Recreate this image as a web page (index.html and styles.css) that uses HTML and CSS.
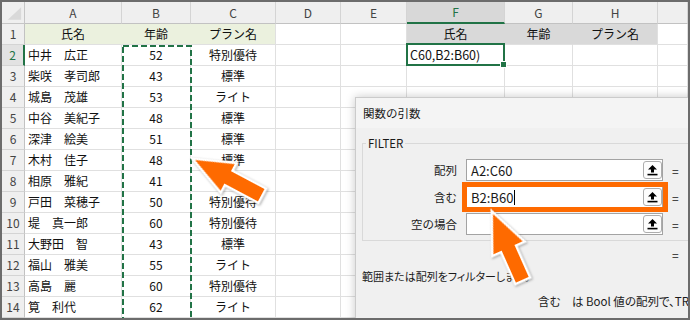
FILE: index.html
```html
<!DOCTYPE html>
<html lang="ja">
<head>
<meta charset="utf-8">
<title>FILTER</title>
<link rel="stylesheet" href="styles.css">
</head>
<body>
<div class="frame">
  <div class="sheet">
    <div class="corner"><svg width="23" height="22" viewBox="0 0 23 22"><polygon points="6,18 20,5 20,18" fill="#d9d9d9"/></svg></div>
    <div class="ch">A</div><div class="ch">B</div><div class="ch">C</div><div class="ch">D</div><div class="ch">E</div><div class="ch sel">F</div><div class="ch">G</div><div class="ch">H</div><div class="ch"></div>

    <div class="rh">1</div>
    <div class="c ctr g">氏名</div><div class="c ctr g">年齢</div><div class="c ctr g gend">プラン名</div><div class="c"></div><div class="c"></div><div class="c ctr gy">氏名</div><div class="c ctr gy">年齢</div><div class="c ctr gy gend">プラン名</div><div class="c"></div>

    <div class="rh sel">2</div>
    <div class="c">中井　広正</div><div class="c ctr">52</div><div class="c ctr">特別優待</div><div class="c"></div><div class="c"></div><div class="c active">C60,B2:B60)</div><div class="c"></div><div class="c"></div><div class="c"></div>

    <div class="rh">3</div>
    <div class="c">柴咲　孝司郎</div><div class="c ctr">43</div><div class="c ctr">標準</div><div class="c"></div><div class="c"></div><div class="c"></div><div class="c"></div><div class="c"></div><div class="c"></div>

    <div class="rh">4</div>
    <div class="c">城島　茂雄</div><div class="c ctr">53</div><div class="c ctr">ライト</div><div class="c"></div><div class="c"></div><div class="c"></div><div class="c"></div><div class="c"></div><div class="c"></div>

    <div class="rh">5</div>
    <div class="c">中谷　美紀子</div><div class="c ctr">48</div><div class="c ctr">標準</div><div class="c"></div><div class="c"></div><div class="c"></div><div class="c"></div><div class="c"></div><div class="c"></div>

    <div class="rh">6</div>
    <div class="c">深津　絵美</div><div class="c ctr">51</div><div class="c ctr">標準</div><div class="c"></div><div class="c"></div><div class="c"></div><div class="c"></div><div class="c"></div><div class="c"></div>

    <div class="rh">7</div>
    <div class="c">木村　佳子</div><div class="c ctr">48</div><div class="c ctr">標準</div><div class="c"></div><div class="c"></div><div class="c"></div><div class="c"></div><div class="c"></div><div class="c"></div>

    <div class="rh">8</div>
    <div class="c">相原　雅紀</div><div class="c ctr">41</div><div class="c ctr"></div><div class="c"></div><div class="c"></div><div class="c"></div><div class="c"></div><div class="c"></div><div class="c"></div>

    <div class="rh">9</div>
    <div class="c">戸田　菜穂子</div><div class="c ctr">50</div><div class="c ctr">特別優待</div><div class="c"></div><div class="c"></div><div class="c"></div><div class="c"></div><div class="c"></div><div class="c"></div>

    <div class="rh">10</div>
    <div class="c">堤　真一郎</div><div class="c ctr">60</div><div class="c ctr">特別優待</div><div class="c"></div><div class="c"></div><div class="c"></div><div class="c"></div><div class="c"></div><div class="c"></div>

    <div class="rh">11</div>
    <div class="c">大野田　智</div><div class="c ctr">43</div><div class="c ctr">標準</div><div class="c"></div><div class="c"></div><div class="c"></div><div class="c"></div><div class="c"></div><div class="c"></div>

    <div class="rh">12</div>
    <div class="c">福山　雅美</div><div class="c ctr">55</div><div class="c ctr">ライト</div><div class="c"></div><div class="c"></div><div class="c"></div><div class="c"></div><div class="c"></div><div class="c"></div>

    <div class="rh">13</div>
    <div class="c">高島　麗</div><div class="c ctr">60</div><div class="c ctr">特別優待</div><div class="c"></div><div class="c"></div><div class="c"></div><div class="c"></div><div class="c"></div><div class="c"></div>

    <div class="rh">14</div>
    <div class="c">筧　利代</div><div class="c ctr">62</div><div class="c ctr">ライト</div><div class="c"></div><div class="c"></div><div class="c"></div><div class="c"></div><div class="c"></div><div class="c"></div>
  </div>

  <div class="dialog">
    <div class="dlg-title">関数の引数</div>
    <fieldset class="group">
      <legend>FILTER</legend>
      <div class="rows">
        <div class="arg">
          <span class="lbl">配列</span>
          <div class="inp"><span class="val">A2:C60</span><span class="btn"><svg width="11" height="12" viewBox="0 0 11 12"><path d="M5.5 1 L10 5.5 H7 V8.5 H4 V5.5 H1 Z" fill="#000"/><rect x="0.5" y="9.8" width="10" height="1.6" fill="#000"/></svg></span></div>
          <span class="eq">=</span>
        </div>
        <div class="arg">
          <span class="lbl">含む</span>
          <div class="inp"><span class="val">B2:B60</span><span class="caret"></span><span class="btn"><svg width="11" height="12" viewBox="0 0 11 12"><path d="M5.5 1 L10 5.5 H7 V8.5 H4 V5.5 H1 Z" fill="#000"/><rect x="0.5" y="9.8" width="10" height="1.6" fill="#000"/></svg></span></div>
          <span class="eq">=</span>
        </div>
        <div class="arg">
          <span class="lbl">空の場合</span>
          <div class="inp"><span class="btn"><svg width="11" height="12" viewBox="0 0 11 12"><path d="M5.5 1 L10 5.5 H7 V8.5 H4 V5.5 H1 Z" fill="#000"/><rect x="0.5" y="9.8" width="10" height="1.6" fill="#000"/></svg></span></div>
          <span class="eq">=</span>
        </div>
      </div>
    </fieldset>
    <div class="result">=</div>
    <p class="desc">範囲または配列をフィルターします。</p>
    <p class="help">含む　は Bool 値の配列で、TRUE の値が保持する行または列を表します。</p>
  </div>

  <svg class="overlay" width="686" height="316" viewBox="2 2 686 316">
    <rect x="123" y="46" width="68" height="300" fill="none" stroke="#217346" stroke-width="2" stroke-dasharray="6 3"/>
    <rect x="464.5" y="184.5" width="201" height="25" fill="none" stroke="#fe6a00" stroke-width="5"/>
    <g class="arrow">
      <polygon transform="translate(195 160) rotate(28)" points="0,0 37,-15 37,-7 75,-7 75,7 37,7 37,15" fill="#fe6a00" stroke="#fff" stroke-width="5" paint-order="stroke" stroke-linejoin="miter"/>
      <polygon transform="translate(493 214) rotate(66)" points="0,0 37,-16 37,-7 72,-7 72,7 37,7 37,16" fill="#fe6a00" stroke="#fff" stroke-width="5" paint-order="stroke" stroke-linejoin="miter"/>
    </g>
  </svg>
</div>
</body>
</html>
```

FILE: styles.css
```css
html, body {
  margin: 0;
  padding: 0;
  background: #fff;
}

.frame {
  position: relative;
  width: 690px;
  height: 320px;
  box-sizing: border-box;
  border: 2px solid #6c6c6c;
  overflow: hidden;
  background: #fff;
  font-family: "Noto Sans CJK JP", "Noto Sans", sans-serif;
  color: #111;
}

.sheet {
  display: grid;
  grid-template-columns: 23px 97px 69px 85px 65px 66px 98px 68px 85px 30px;
  grid-template-rows: 22px;
  grid-auto-rows: 21px;
  font-size: 12px;
  line-height: 14px;
}

.sheet > div {
  box-sizing: border-box;
  display: flex;
  align-items: center;
  white-space: nowrap;
}

.corner {
  background: #efefef;
  border-right: 1px solid #c6c6c6;
  border-bottom: 1px solid #c6c6c6;
}

.corner svg {
  display: block;
}

.ch {
  justify-content: center;
  background: #efefef;
  color: #444;
  border-right: 1px solid #d4d4d4;
  border-bottom: 1px solid #c2c2c2;
}

.ch.sel {
  background: #d8d8d8;
  color: #217346;
  border-bottom: 2px solid #217346;
}

.rh {
  justify-content: center;
  background: #efefef;
  color: #444;
  border-right: 1px solid #c2c2c2;
  border-bottom: 1px solid #d4d4d4;
}

.rh.sel {
  background: #e2e2e2;
  color: #217346;
  border-right: 2px solid #217346;
}

.c {
  padding: 0 3px;
  border-right: 1px solid #e0e0e0;
  border-bottom: 1px solid #e0e0e0;
}

.ctr {
  justify-content: center;
}

.g {
  background: #ebf1de;
  border-right-color: #ebf1de;
}

.gy {
  background: #d9d9d9;
  border-right-color: #d9d9d9;
}

.g.gend,
.gy.gend {
  border-right-color: #e0e0e0;
}

.active {
  position: relative;
  font-size: 12.5px;
  padding-left: 3px;
}

.active::after {
  content: "";
  position: absolute;
  left: -1px;
  top: -2px;
  right: -1px;
  bottom: -1px;
  border: 2px solid #217346;
}

.active::before {
  content: "";
  position: absolute;
  right: -3px;
  bottom: -3px;
  width: 5px;
  height: 5px;
  background: #217346;
  border: 1px solid #fff;
  z-index: 2;
}

/* dialog */
.dialog {
  position: absolute;
  left: 353px;
  top: 95px;
  width: 420px;
  height: 260px;
  box-sizing: border-box;
  background: #f0f0f0;
  border: 1px solid #cbcbcb;
  box-shadow: 0 0 9px rgba(0, 0, 0, 0.22);
  font-size: 11.5px;
  color: #1a1a1a;
}

.dlg-title {
  height: 30px;
  line-height: 30px;
  padding-left: 7px;
  background: #f4f4f4;
}

.group {
  margin: 8px 0 0 6px;
  padding: 0 0 5px 0;
  width: 400px;
  border: 1px solid #d9d9d9;
  box-sizing: border-box;
}

.group legend {
  margin-left: 3px;
  padding: 0 2px;
  line-height: 14px;
  font-size: 11.5px;
}

.rows {
  margin-top: 9px;
  display: flex;
  flex-direction: column;
  gap: 5px;
}

.arg {
  display: flex;
  align-items: center;
  height: 22px;
}

.lbl {
  flex: none;
  width: 94px;
  text-align: right;
}

.inp {
  flex: none;
  margin-left: 9px;
  width: 197px;
  height: 22px;
  box-sizing: border-box;
  border: 1px solid #a3a3a3;
  background: #fff;
  display: flex;
  align-items: center;
  padding-left: 4px;
  font-size: 13px;
}

.caret {
  display: inline-block;
  width: 1px;
  height: 15px;
  background: #000;
  margin-left: 1px;
}

.btn {
  margin-left: auto;
  width: 19px;
  height: 18px;
  box-sizing: border-box;
  border: 1px solid #adadad;
  border-radius: 3px;
  background: #fdfdfd;
  display: flex;
  align-items: center;
  justify-content: center;
}

.btn svg {
  display: block;
}

.eq {
  margin-left: 9px;
  font-size: 12px;
}

.result {
  margin: 7px 0 0 316px;
  line-height: 14px;
  font-size: 12px;
}

.desc {
  margin: 7px 0 0 6px;
  line-height: 14px;
  font-size: 11px;
  font-feature-settings: "palt";
  white-space: nowrap;
}

.help {
  margin: 11px 0 0 182px;
  line-height: 14px;
  font-size: 11.5px;
  font-feature-settings: "palt";
  white-space: nowrap;
}

.overlay {
  position: absolute;
  left: 0;
  top: 0;
  pointer-events: none;
}

.arrow {
  filter: drop-shadow(1px 1px 1.2px rgba(0, 0, 0, 0.3));
}
```
